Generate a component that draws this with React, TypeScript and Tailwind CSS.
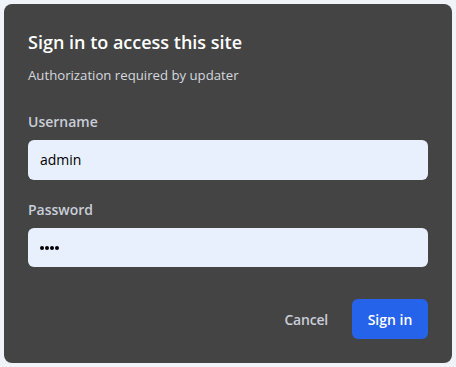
import React from "react";

export default function App() {
  return (
    <div className="w-[456px] h-[367px] bg-[#f0f4f9] p-1" style={{ fontFamily: '"Open Sans", "Noto Sans", sans-serif' }}>
      <div className="w-[448px] h-[359px] bg-[#444444] rounded-lg px-6 pt-6 pb-6 flex flex-col">
        <h1 className="text-[18px] leading-[28px] font-semibold text-white">Sign in to access this site</h1>
        <p className="mt-[10px] text-[13.2px] leading-[18px] text-[#d4d8de]">Authorization required by updater</p>
        <label className="mt-[28px] text-[14px] leading-[20px] font-semibold text-[#c9ced8]">Username</label>
        <div className="mt-[8px] h-10 rounded-md bg-[#e8f0fe] px-3 flex items-center text-[14px] text-black">admin</div>
        <label className="mt-[20px] text-[14px] leading-[20px] font-semibold text-[#c9ced8]">Password</label>
        <div className="mt-[8px] h-10 rounded-md bg-[#e8f0fe] px-3 flex items-center gap-[1px] pt-[1px]" aria-label="••••">
          <span className="w-[4px] h-[4px] rounded-full bg-black" />
          <span className="w-[4px] h-[4px] rounded-full bg-black" />
          <span className="w-[4px] h-[4px] rounded-full bg-black" />
          <span className="w-[4px] h-[4px] rounded-full bg-black" />
        </div>
        <div className="mt-8 flex justify-end items-center gap-2">
          <button className="h-10 px-4 text-[14px] font-semibold text-[#c9ced8] tracking-[-0.2px]">Cancel</button>
          <button className="h-10 w-[76px] rounded-md bg-[#2563eb] text-[14px] font-semibold text-white">Sign in</button>
        </div>
      </div>
    </div>
  );
}
